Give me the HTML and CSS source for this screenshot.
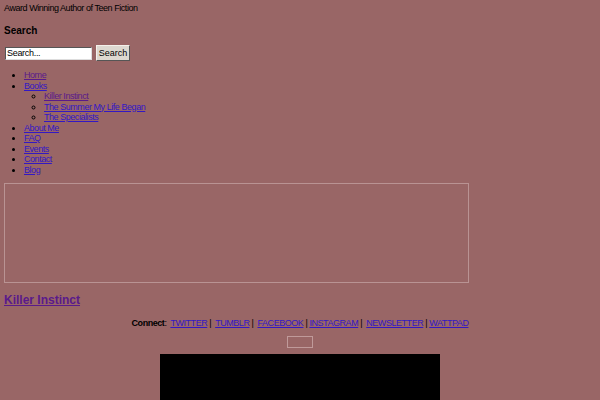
FILE: index.html
```html
<!DOCTYPE html>
<html>
<head>
<meta charset="utf-8">
<link rel="stylesheet" href="styles.css">
</head>
<body>
<div class="tagline">Award Winning Author of Teen Fiction</div>
<h3 class="search-title">Search</h3>
<form class="search-form">
  <input class="search-input" type="text" value="Search...">
  <button class="search-btn" type="button">Search</button>
</form>
<ul class="menu">
  <li><a class="visited" href="#">Home</a></li>
  <li><a href="#">Books</a>
    <ul class="submenu">
      <li><a class="visited" href="#">Killer Instinct</a></li>
      <li><a href="#">The Summer My Life Began</a></li>
      <li><a href="#">The Specialists</a></li>
    </ul>
  </li>
  <li><a href="#">About Me</a></li>
  <li><a href="#">FAQ</a></li>
  <li><a href="#">Events</a></li>
  <li><a href="#">Contact</a></li>
  <li><a href="#">Blog</a></li>
</ul>
<div class="banner"></div>
<h2 class="post-title"><a class="visited" href="#">Killer Instinct</a></h2>
<div class="connect"><b class="connect-label">Connect</b>:&nbsp; <a href="#">TWITTER</a> |&nbsp; <a href="#">TUMBLR</a> |&nbsp; <a href="#">FACEBOOK</a> | <a href="#">INSTAGRAM</a> |&nbsp; <a href="#">NEWSLETTER</a> | <a href="#">WATTPAD</a></div>
<div class="small-box-row"><div class="small-box"></div></div>
<div class="video-row"><div class="video"></div></div>
</body>
</html>
```
FILE: styles.css
```css
html, body {
  background: #996666;
}
body {
  margin: 0;
  padding: 3px 4px 0 4px;
  font-family: "Liberation Sans", Arial, sans-serif;
  font-size: 9px;
  line-height: 10.5px;
  letter-spacing: -0.45px;
  color: #000;
}
a {
  color: #3318c4;
}
a.visited {
  color: #5a1a8b;
}
.tagline {
  height: 11px;
}
.search-title {
  font-size: 10px;
  font-weight: bold;
  letter-spacing: 0;
  margin: 10px 0 0 0;
  line-height: 13px;
}
.search-form {
  margin: 8px 0 0 1px;
  display: flex;
  align-items: center;
  gap: 4px;
  height: 16px;
}
.search-input {
  width: 87px;
  height: 13px;
  box-sizing: border-box;
  border: 1px solid #555;
  border-right-color: #ddd;
  border-bottom-color: #ddd;
  padding: 0 1px;
  font: 9px "Liberation Sans", Arial, sans-serif;
  letter-spacing: -0.3px;
  background: #fff;
  color: #000;
}
.search-btn {
  width: 34px;
  height: 16px;
  box-sizing: border-box;
  padding: 0;
  font: 9px "Liberation Sans", Arial, sans-serif;
  letter-spacing: 0;
  background: #ddd8d0;
  border: 1px solid;
  border-color: #f4f0ea #555 #555 #f4f0ea;
  color: #000;
}
.menu {
  margin: 9px 0 0 0;
  padding: 0 0 0 20px;
  list-style: disc;
}
.submenu {
  margin: 0;
  padding: 0 0 0 20px;
  list-style: circle;
}
.banner {
  margin-top: 8px;
  width: 465px;
  height: 100px;
  box-sizing: border-box;
  border: 1px solid #b99393;
}
.post-title {
  font-size: 12px;
  font-weight: bold;
  letter-spacing: 0;
  margin: 10px 0 0 0;
  line-height: 14px;
}
.connect {
  margin: 11px -4px 0 -4px;
  text-align: center;
}
.connect-label {
  font-weight: bold;
}
.small-box-row {
  display: flex;
  justify-content: center;
  margin: 7px -4px 0 -4px;
}
.small-box {
  width: 26px;
  height: 12px;
  box-sizing: border-box;
  border: 1px solid #c09a9a;
}
.video-row {
  display: flex;
  justify-content: center;
  margin: 6px -4px 0 -4px;
}
.video {
  width: 280px;
  height: 60px;
  background: #000;
}
```
